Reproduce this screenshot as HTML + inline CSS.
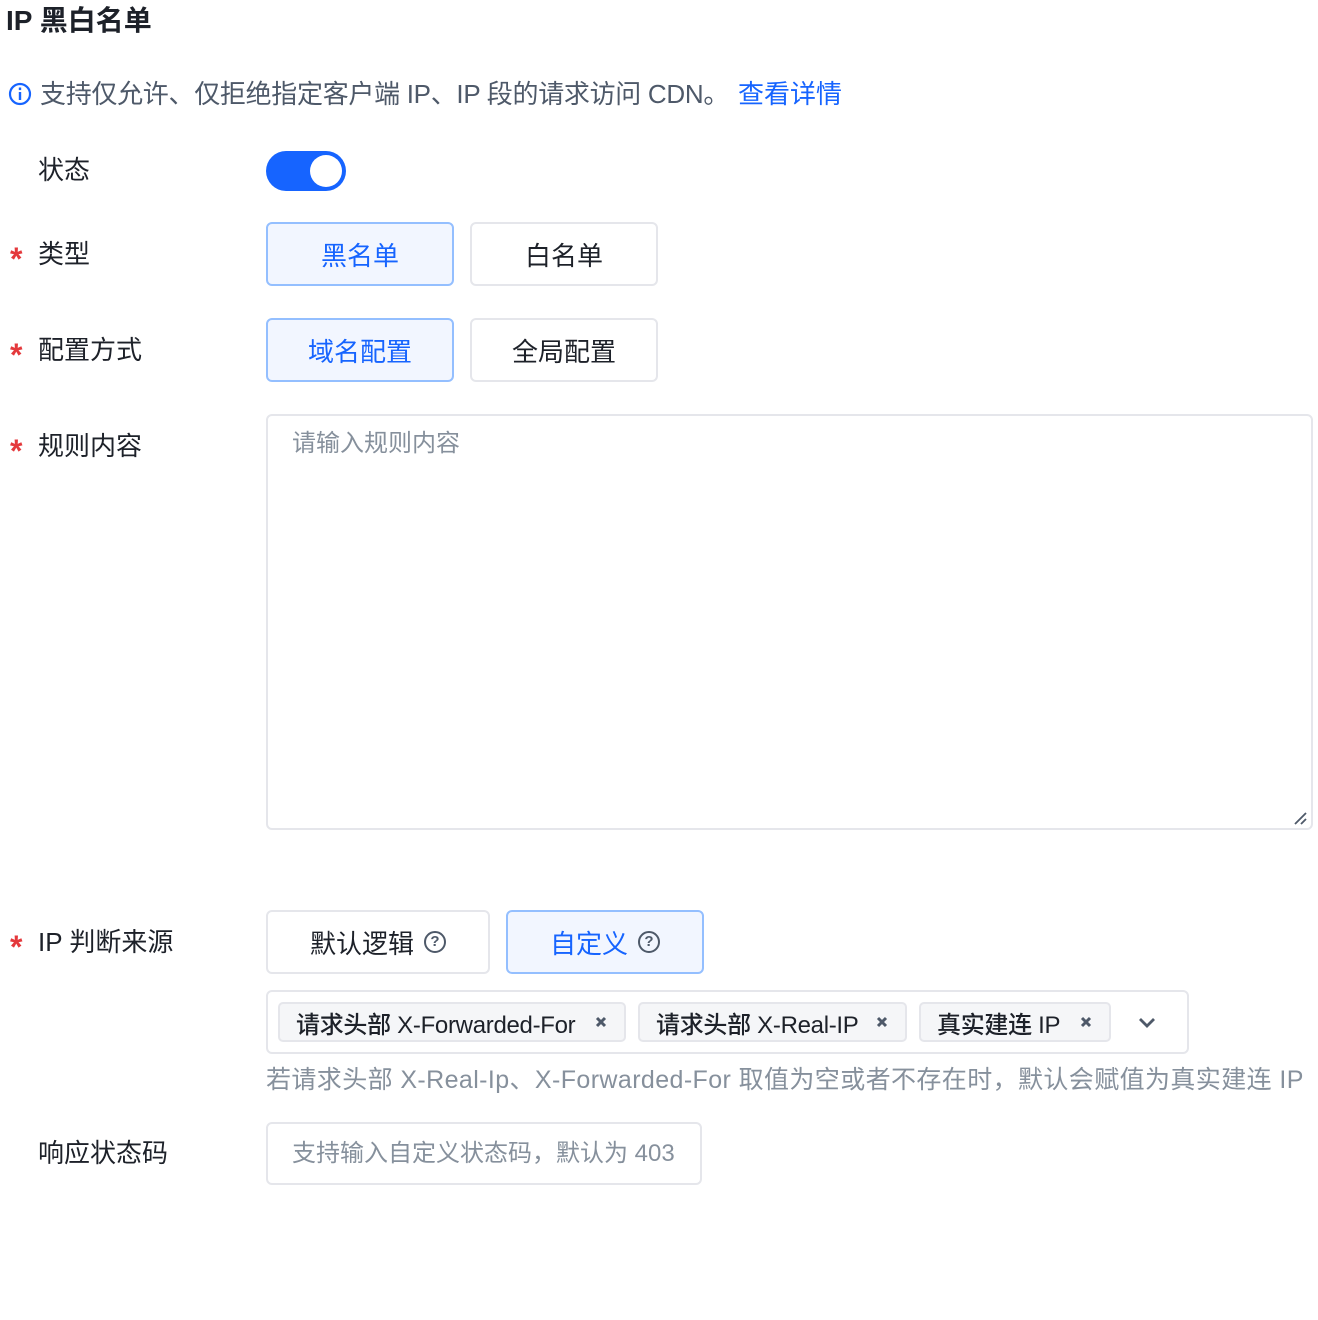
<!DOCTYPE html>
<html><head><meta charset="utf-8"><style>
*{box-sizing:border-box;margin:0;padding:0}
body{width:1318px;height:1320px;background:#fff;font-family:"Liberation Sans","Noto Sans CJK SC",sans-serif;font-size:26px;color:#1d2129;position:relative;overflow:hidden}
.a{position:absolute;white-space:nowrap;line-height:1}
.lbl{color:#1d2129;left:38px}
.star{color:#e4393c;left:10px;font-size:32px;font-weight:bold}
.btn{position:absolute;border:2px solid #e5e6eb;border-radius:6px;background:#fff;display:flex;align-items:center;justify-content:center;color:#1d2129;font-size:26px}
.btn.on{border-color:#94bfff;background:#f2f6ff;color:#1664ff}
.tag{position:absolute;top:1002px;height:40px;border:2px solid #e5e6eb;border-radius:5px;background:#f5f6f8;display:flex;align-items:center;padding-left:16px;font-size:24px;color:#1d2129;font-weight:500;letter-spacing:-0.3px}
.tag .x{position:absolute;right:14px;top:9px;width:18px;height:18px}
.q{display:inline-block;width:22px;height:22px;border:2px solid #4e5969;border-radius:50%;font-size:15px;line-height:18px;text-align:center;color:#4e5969;margin-left:10px;font-weight:bold}
</style></head><body>
<div class="a" style="left:6px;top:7px;font-size:28px;font-weight:bold;color:#1d2129">IP 黑白名单</div>

<svg class="a" style="left:8px;top:82px" width="24" height="24" viewBox="0 0 24 24"><circle cx="12" cy="12" r="10" fill="none" stroke="#1664ff" stroke-width="2.2"/><rect x="10.8" y="10" width="2.4" height="8" fill="#1664ff"/><rect x="10.8" y="5.5" width="2.4" height="2.6" fill="#1664ff"/></svg>
<div class="a" style="left:40px;top:81px;color:#4e5969;letter-spacing:-0.3px">支持仅允许、仅拒绝指定客户端 IP、IP 段的请求访问 CDN。 <span style="color:#1664ff;margin-left:2px;letter-spacing:0">查看详情</span></div>

<div class="a lbl" style="top:157px">状态</div>
<div class="a" style="left:266px;top:151px;width:80px;height:40px;border-radius:20px;background:#1664ff"></div>
<div class="a" style="left:310px;top:155px;width:32px;height:32px;border-radius:50%;background:#fff"></div>

<div class="a star" style="top:243px">*</div>
<div class="a lbl" style="top:241px">类型</div>
<div class="btn on" style="left:266px;top:222px;width:188px;height:64px">黑名单</div>
<div class="btn" style="left:470px;top:222px;width:188px;height:64px">白名单</div>

<div class="a star" style="top:339px">*</div>
<div class="a lbl" style="top:337px">配置方式</div>
<div class="btn on" style="left:266px;top:318px;width:188px;height:64px">域名配置</div>
<div class="btn" style="left:470px;top:318px;width:188px;height:64px">全局配置</div>

<div class="a star" style="top:435px">*</div>
<div class="a lbl" style="top:433px">规则内容</div>
<div class="a" style="left:266px;top:414px;width:1047px;height:416px;border:2px solid #e5e6eb;border-radius:6px"></div>
<div class="a" style="left:292px;top:432px;color:#86909c;font-size:24px">请输入规则内容</div>
<svg class="a" style="left:1292px;top:810px" width="16" height="16" viewBox="0 0 16 16"><path d="M3 14L14 3M9 14L14 9" stroke="#4e5969" stroke-width="1.8"/></svg>

<div class="a star" style="top:931px">*</div>
<div class="a lbl" style="top:929px">IP 判断来源</div>
<div class="btn" style="left:266px;top:910px;width:224px;height:64px">默认逻辑<span class="q">?</span></div>
<div class="btn on" style="left:506px;top:910px;width:198px;height:64px">自定义<span class="q">?</span></div>

<div class="a" style="left:266px;top:990px;width:923px;height:64px;border:2px solid #e5e6eb;border-radius:6px"></div>
<div class="tag" style="left:278px;width:348px">请求头部 X-Forwarded-For<svg class="x" viewBox="0 0 18 18"><path d="M5 5L13 13M13 5L5 13" stroke="#4e5969" stroke-width="3"/></svg></div>
<div class="tag" style="left:638px;width:269px">请求头部 X-Real-IP<svg class="x" viewBox="0 0 18 18"><path d="M5 5L13 13M13 5L5 13" stroke="#4e5969" stroke-width="3"/></svg></div>
<div class="tag" style="left:919px;width:192px">真实建连 IP<svg class="x" viewBox="0 0 18 18"><path d="M5 5L13 13M13 5L5 13" stroke="#4e5969" stroke-width="3"/></svg></div>
<svg class="a" style="left:1137px;top:1012px" width="20" height="20" viewBox="0 0 20 20"><path d="M3 7L10 14L17 7" fill="none" stroke="#4e5969" stroke-width="2.8"/></svg>

<div class="a" style="left:266px;top:1068px;color:#86909c;font-size:25px;letter-spacing:0.4px">若请求头部 X-Real-Ip、X-Forwarded-For 取值为空或者不存在时，默认会赋值为真实建连 IP</div>

<div class="a lbl" style="top:1140px">响应状态码</div>
<div class="a" style="left:266px;top:1122px;width:436px;height:63px;border:2px solid #e5e6eb;border-radius:6px"></div>
<div class="a" style="left:292px;top:1142px;color:#86909c;font-size:24px">支持输入自定义状态码，默认为 403</div>
</body></html>
